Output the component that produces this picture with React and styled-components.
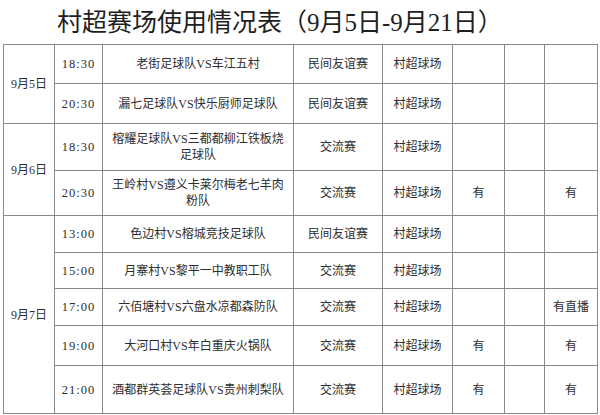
import React from "react";
import styled, { createGlobalStyle } from "styled-components";

const GlobalStyle = createGlobalStyle`
  html, body {
    margin: 0;
    padding: 0;
    background: #fff;
  }
  body {
    font-family: "Liberation Serif", "Noto Sans CJK SC", serif;
    color: #2e2e2e;
  }
`;

const days = [
  {
    date: "9月5日",
    games: [
      { time: "18:30", match: "老街足球队VS车江五村", type: "民间友谊赛", h: 39 },
      { time: "20:30", match: "漏七足球队VS快乐厨师足球队", type: "民间友谊赛", h: 40 }
    ]
  },
  {
    date: "9月6日",
    games: [
      { time: "18:30", match: "榕耀足球队VS三都都柳江铁板烧足球队", type: "交流赛", h: 47 },
      { time: "20:30", match: "王岭村VS遵义卡莱尔梅老七羊肉粉队", type: "交流赛", a: "有", c: "有", h: 45 }
    ]
  },
  {
    date: "9月7日",
    games: [
      { time: "13:00", match: "色边村VS榕城竞技足球队", type: "民间友谊赛", h: 37 },
      { time: "15:00", match: "月寨村VS黎平一中教职工队", type: "交流赛", h: 36 },
      { time: "17:00", match: "六佰塘村VS六盘水凉都森防队", type: "交流赛", c: "有直播", h: 37 },
      { time: "19:00", match: "大河口村VS年白重庆火锅队", type: "交流赛", a: "有", c: "有", h: 40 },
      { time: "21:00", match: "酒都群英荟足球队VS贵州刺梨队", type: "交流赛", a: "有", c: "有", h: 48 }
    ]
  }
];

const widths = [51, 48, 191, 89, 70, 52, 40, 53];

const App = () => (
  <Page>
    <GlobalStyle />
    <Title>村超赛场使用情况表（9月5日-9月21日）</Title>
    <Sheet>
      <colgroup>
        {widths.map((w, i) => (
          <col key={i} style={{ width: w }} />
        ))}
      </colgroup>
      <tbody>
        {days.map(day =>
          day.games.map((g, i) => (
            <Row key={day.date + g.time} $h={g.h}>
              {i === 0 && <Cell rowSpan={day.games.length}>{day.date}</Cell>}
              <Time>{g.time}</Time>
              <Cell $pad>{g.match}</Cell>
              <Cell>{g.type}</Cell>
              <Cell>村超球场</Cell>
              <Cell>{g.a}</Cell>
              <Cell />
              <Cell>{g.c}</Cell>
            </Row>
          ))
        )}
      </tbody>
    </Sheet>
  </Page>
);

export default App;

const Page = styled.div`
  width: 600px;
  height: 415px;
  overflow: hidden;
`;

const Title = styled.h1`
  margin: 0;
  height: 44px;
  padding-left: 57px;
  font-size: 25px;
  font-weight: normal;
  line-height: 45px;
  color: #1f1f1f;
  white-space: nowrap;
`;

const Sheet = styled.table`
  margin-left: 3px;
  width: 595px;
  table-layout: fixed;
  border-collapse: collapse;
  border-spacing: 0;
`;

const Row = styled.tr`
  height: ${p => p.$h}px;
`;

const Cell = styled.td`
  border: 1px solid #8a8a8a;
  padding: ${p => (p.$pad ? "0 8px" : "0")};
  font-size: 12px;
  line-height: 16px;
  text-align: center;
  vertical-align: middle;
`;

const Time = styled(Cell)`
  letter-spacing: 1px;
  font-size: 12.5px;
`;
